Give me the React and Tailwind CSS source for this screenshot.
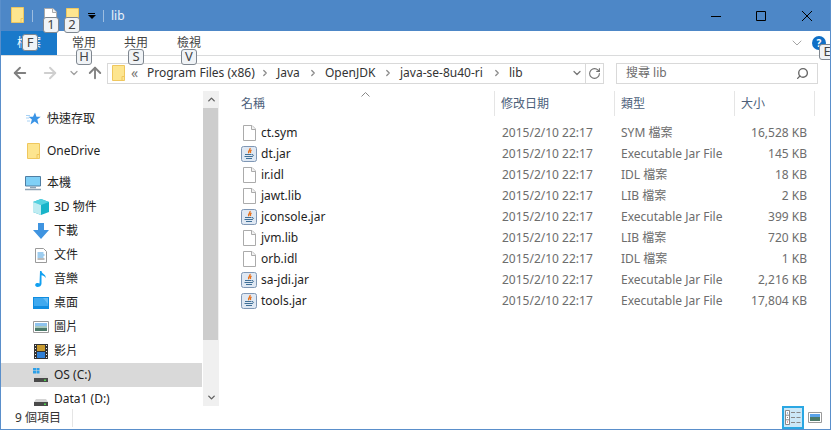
import { ChevronDown, ChevronUp, ArrowLeft, ArrowRight, ArrowUp, RotateCw, Search, ChevronRight } from 'lucide-react';

const font = { fontFamily: '"Noto Sans", "Noto Sans CJK TC", sans-serif' };

const files = [
  { name: 'ct.sym', type: 'SYM 檔案', size: '16,528 KB' },
  { name: 'dt.jar', type: 'Executable Jar File', size: '145 KB', jar: true },
  { name: 'ir.idl', type: 'IDL 檔案', size: '18 KB' },
  { name: 'jawt.lib', type: 'LIB 檔案', size: '2 KB' },
  { name: 'jconsole.jar', type: 'Executable Jar File', size: '399 KB', jar: true },
  { name: 'jvm.lib', type: 'LIB 檔案', size: '720 KB' },
  { name: 'orb.idl', type: 'IDL 檔案', size: '1 KB' },
  { name: 'sa-jdi.jar', type: 'Executable Jar File', size: '2,216 KB', jar: true },
  { name: 'tools.jar', type: 'Executable Jar File', size: '17,804 KB', jar: true },
];

function Folder({ className = 'w-[13px] h-[16px]' }) {
  return (
    <svg className={`shrink-0 ${className}`} viewBox="0 0 13 16">
      <path d="M.5.5h12v15H.5z" fill="#fde58f" stroke="#efc75e" />
      <path d="M10 15.500v-4h2.500" fill="none" stroke="#efc75e" />
    </svg>
  );
}

function DocIcon() {
  return (
    <svg className="w-[13px] h-[16px]" viewBox="0 0 13 16">
      <path d="M.5.500h8.500l3.500 3.500v11.500h-12z" fill="#fff" stroke="#ababab" />
      <path d="M8.500.500v4h4" fill="#f2f2f2" stroke="#ababab" />
    </svg>
  );
}

function JarIcon() {
  return (
    <svg className="w-[16px] h-[16px]" viewBox="0 0 16 16">
      <rect x=".5" y=".5" width="15" height="15" rx="2" fill="#dfe8f3" stroke="#7f97b5" />
      <path d="M9 2c1 1.800-2.500 2.800-1.300 5.200M10.500 4c-1.300.8-1.500 1.800-.8 3" fill="none" stroke="#e8701a" strokeWidth="1.300" />
      <path d="M4 8.500h6.500M3.500 10.500h8M5 12.500h6" stroke="#3f6f96" strokeWidth="1" />
      <path d="M11 8.500c2 0 2 2-.5 2" fill="none" stroke="#3f6f96" />
    </svg>
  );
}

function Drive({ windows }) {
  return (
    <svg className="w-[16px] h-[16px] mt-[2px]" viewBox="0 0 16 16">
      {windows && <path d="M0 0h3v2.500h-3zM3.500 0h3v2.500h-3zM0 3h3v2.500h-3zM3.500 3h3v2.500h-3z" fill="#2b9fe8" />}
      <path d="M3 7h10l2 3h-14z" fill="#d4d4d4" />
      <path d="M1 10h14v4h-14z" fill="#4a4a4a" />
      <path d="M11 11.500h2v1.500h-2z" fill="#4fd34f" />
    </svg>
  );
}

const navIcons = {
  star: (
    <svg className="w-[15px] h-[14px]" viewBox="0 0 15 14">
      <path d="M9 .5l1.500 4.200h4.200l-3.400 2.800 1.300 5-3.900-3-4.200 3 1.400-5-3.400-2.800h4.500z" fill="#3a94e6" />
      <path d="M0 3.500h4M0 6h3M1 9h3" stroke="#a8d2f5" />
    </svg>
  ),
  pc: (
    <svg className="w-[16px] h-[15px]" viewBox="0 0 16 15">
      <path d="M.5.500h15v9.500h-15z" fill="#7fd0f7" stroke="#4f7ea3" />
      <path d="M5 11.500h6M0 13.500h16" stroke="#8ea3b5" strokeWidth="1.500" />
    </svg>
  ),
  cube: (
    <svg className="w-[16px] h-[16px]" viewBox="0 0 16 16">
      <path d="M8 0l8 3v10l-8 3-8-3v-10z" fill="#18b4c9" />
      <path d="M8 0l8 3-8 3-8-3z" fill="#55d2e0" />
      <path d="M0 3l8 3v10l-8-3z" fill="#bfecf2" />
    </svg>
  ),
  down: (
    <svg className="w-[16px] h-[16px]" viewBox="0 0 16 16">
      <path d="M5 0h6v7h5l-8 9-8-9h5z" fill="#3f94e0" />
    </svg>
  ),
  doc: (
    <svg className="w-[12px] h-[15px]" viewBox="0 0 12 15">
      <path d="M.5.500h8l3 3v11h-11z" fill="#fff" stroke="#9a9a9a" />
      <path d="M2.500 5h6M2.500 7h7M2.500 9h6" stroke="#3d9be0" />
      <path d="M2.500 11h7" stroke="#777" />
    </svg>
  ),
  music: (
    <svg className="w-[12px] h-[16px]" viewBox="0 0 12 16">
      <path d="M5 0h1.500c.3 3 5 3.500 4 7-.8-2-2.500-2.500-4-2.800v8.500c0 2-2 3.300-4 3.300-3 0-3-3.500-.5-4 1-.2 2 0 2.500.4z" fill="#12a0f0" />
    </svg>
  ),
  desk: (
    <svg className="w-[16px] h-[12px]" viewBox="0 0 16 12">
      <path d="M0 0h16v12h-16z" fill="#0f8ce0" />
      <path d="M1 1h14v8h-14z" fill="#3fa9ef" />
      <path d="M10 1l5 0v6z" fill="#66bdf5" />
    </svg>
  ),
  pic: (
    <svg className="w-[16px] h-[12px]" viewBox="0 0 16 12">
      <path d="M.5.500h15v11h-15z" fill="#fff" stroke="#9a9a9a" />
      <path d="M2 2h12v3h-12z" fill="#8ec3ee" />
      <path d="M2 5h12v2h-12z" fill="#a9c9c0" />
      <path d="M2 7h12v3h-12z" fill="#4c7a6a" />
    </svg>
  ),
  film: (
    <svg className="w-[14px] h-[15px]" viewBox="0 0 14 15">
      <path d="M0 0h14v15h-14z" fill="#333" />
      <path d="M3 1h8v6h-8z" fill="#c79a2e" />
      <path d="M3 8h8v6h-8z" fill="#2f7fd6" />
      <path d="M1 1h1v1h-1zM1 4h1v1h-1zM1 7h1v1h-1zM1 10h1v1h-1zM1 13h1v1h-1zM12 1h1v1h-1zM12 4h1v1h-1zM12 7h1v1h-1zM12 10h1v1h-1zM12 13h1v1h-1z" fill="#eee" />
    </svg>
  ),
};

const nav = [
  { label: '快速存取', icon: navIcons.star, top: true, mb: 'mb-[8px]' },
  { label: 'OneDrive', icon: <Folder />, top: true, mb: 'mb-[8px]' },
  { label: '本機', icon: navIcons.pc, top: true },
  { label: '3D 物件', icon: navIcons.cube },
  { label: '下載', icon: navIcons.down },
  { label: '文件', icon: navIcons.doc },
  { label: '音樂', icon: navIcons.music },
  { label: '桌面', icon: navIcons.desk },
  { label: '圖片', icon: navIcons.pic },
  { label: '影片', icon: navIcons.film },
  { label: 'OS (C:)', icon: <Drive windows />, active: true },
  { label: 'Data1 (D:)', icon: <Drive /> },
];

function KeyTip({ children, className }) {
  return (
    <span className={`absolute flex items-center justify-center w-[16px] bg-[#f0f3f6] border border-[#7f8790] rounded-[3px] text-[13px] text-[#444] ${className}`}>
      {children}
    </span>
  );
}

function Crumb({ children, className, last }) {
  return (
    <div className={`flex items-center justify-between pr-[7px] shrink-0 ${className}`}>
      <span>{children}</span>
      {!last && <ChevronRight className="w-[10px] h-[10px] text-[#8a8a8a]" strokeWidth={3} />}
    </div>
  );
}

export default function App() {
  return (
    <div style={font} className="relative w-[831px] h-[430px] overflow-hidden bg-white border-x border-b border-[#5a8fcb] text-[12px] text-[#1e1e1e] flex flex-col">
      {/* title bar */}
      <div className="h-[31px] shrink-0 bg-[#4d87c7] flex items-center pl-[10px]">
        <Folder className="w-[13px] h-[16px] mt-[-1px]" />
        <span className="w-px h-[12px] bg-[#9dbde0] ml-[8px]" />
        <span className="w-[13px] ml-[11px]"><DocIcon /></span>
        <span className="w-[13px] ml-[9px]"><Folder /></span>
        <span className="ml-[9px] flex flex-col items-center w-[7px]">
          <span className="w-[7px] h-px bg-black mb-px" />
          <span className="w-0 h-0 border-x-[4px] border-x-transparent border-t-[4px] border-t-black" />
        </span>
        <span className="w-px h-[12px] bg-[#9dbde0] ml-[8px]" />
        <span className="ml-[7px] text-white/90 text-[12px]">lib</span>
        <div className="ml-auto flex items-center mr-[18px]">
          <svg className="w-[10px] h-[10px]" viewBox="0 0 10 10"><path d="M0 5.500h10" stroke="#000" /></svg>
          <svg className="w-[10px] h-[10px] ml-[35px]" viewBox="0 0 10 10"><path d="M.5.500h9v9h-9z" fill="none" stroke="#000" /></svg>
          <svg className="w-[10px] h-[10px] ml-[36px]" viewBox="0 0 10 10"><path d="M0 0l10 10M10 0l-10 10" stroke="#000" /></svg>
        </div>
      </div>

      {/* ribbon tabs */}
      <div className="h-[25px] shrink-0 flex items-center border-b border-[#dadbdc]">
        <div className="w-[56px] h-full bg-[#1979ca] text-white flex items-center justify-center">檔案</div>
        <div className="ml-[15px] w-[52px] text-[#444]">常用</div>
        <div className="w-[53px] text-[#444]">共用</div>
        <div className="text-[#444]">檢視</div>
        <ChevronDown className="ml-auto mr-[7px] w-[16px] h-[16px] text-[#a5a5a5]" strokeWidth={1.500} />
        <span className="mr-[4px] w-[14px] h-[14px] rounded-full bg-[#0f6fc6] text-white text-[10px] font-bold flex items-center justify-center">?</span>
      </div>

      {/* address row */}
      <div className="h-[34px] shrink-0 flex items-center pl-[10px] text-[#808080]">
        <ArrowLeft className="w-[18px] h-[18px]" strokeWidth={2.500} />
        <ArrowRight className="w-[18px] h-[18px] ml-[12px] text-[#cfcfcf]" strokeWidth={2.500} />
        <ChevronDown className="w-[12px] h-[12px] ml-[9px] text-[#a0a0a0]" strokeWidth={2.500} />
        <ArrowUp className="w-[18px] h-[18px] ml-[6px]" strokeWidth={2.500} />
        <div className="ml-[3px] w-[497px] h-[21px] flex items-center border border-[#d9d9d9] pl-[4px]">
          <Folder />
          <span className="w-[22px] pl-[6px] text-[#777] text-[14px] leading-none">«</span>
          <div className="flex items-center text-[#333]">
            <Crumb className="w-[130px]">Program Files (x86)</Crumb>
            <Crumb className="w-[48px]">Java</Crumb>
            <Crumb className="w-[75px]">OpenJDK</Crumb>
            <Crumb className="w-[109px]">java-se-8u40-ri</Crumb>
            <Crumb last>lib</Crumb>
          </div>
          <ChevronDown className="ml-auto mr-[2px] w-[12px] h-[12px] text-[#777]" strokeWidth={2.500} />
          <span className="w-[18px] h-full border-l border-[#d9d9d9] flex items-center justify-center">
            <RotateCw className="w-[13px] h-[13px] text-[#707070]" strokeWidth={2} />
          </span>
        </div>
        <div className="ml-[12px] w-[202px] h-[21px] flex items-center border border-[#d9d9d9] pl-[9px] pr-[8px] text-[#6d6d6d]">
          <span>搜尋 lib</span>
          <Search className="ml-auto w-[13px] h-[13px] -scale-x-100 text-[#666]" strokeWidth={2.500} />
        </div>
      </div>

      {/* body */}
      <div className="flex-1 min-h-0 flex">
        {/* navigation pane */}
        <div className="w-[201px] shrink-0 pt-[17px] overflow-hidden">
          {nav.map(n => (
            <div key={n.label} className={`h-[24px] flex items-center ${n.top ? 'pl-[24px] gap-[6px]' : 'pl-[32px] gap-[5px]'} ${n.mb || ''} ${n.active ? 'bg-[#d9d9d9]' : ''}`}>
              <span className="w-[16px] flex items-center justify-center shrink-0">{n.icon}</span>
              <span className="whitespace-nowrap">{n.label}</span>
            </div>
          ))}
        </div>

        {/* scrollbar */}
        <div className="w-[16px] shrink-0 mt-px ml-px bg-[#f0f0f0] flex flex-col text-[#606060]">
          <div className="h-[17px] flex items-center justify-center"><ChevronUp className="w-[11px] h-[11px]" strokeWidth={3} /></div>
          <div className="w-[15px] h-[232px] bg-[#cdcdcd]" />
          <div className="mt-auto h-[17px] flex items-center justify-center"><ChevronDown className="w-[11px] h-[11px]" strokeWidth={3} /></div>
        </div>

        {/* file list */}
        <div className="flex-1 min-w-0 relative pl-[22px]">
          <svg className="absolute left-[142px] top-[2px] w-[9px] h-[5px]" viewBox="0 0 9 5">
            <path d="M.5 4.500l4-4 4 4" fill="none" stroke="#888" />
          </svg>
          <div className="h-[25px] mt-[1px] flex items-center text-[#4c607a]">
            <div className="w-[254px] h-full flex items-center border-r border-[#e5e5e5]">名稱</div>
            <div className="w-[120px] h-full flex items-center pl-[6px] border-r border-[#e5e5e5]">修改日期</div>
            <div className="w-[120px] h-full flex items-center pl-[6px] border-r border-[#e5e5e5]">類型</div>
            <div className="w-[80px] h-full flex items-center pl-[6px] border-r border-[#e5e5e5]">大小</div>
          </div>
          <div className="mt-[6px]">
            {files.map(f => (
              <div key={f.name} className="h-[21px] flex items-center">
                <div className="w-[254px] flex items-center">
                  <span className="w-[16px] flex justify-center">{f.jar ? <JarIcon /> : <DocIcon />}</span>
                  <span className="ml-[4px] text-[#1e1e1e]">{f.name}</span>
                </div>
                <div className="w-[120px] pl-[7px] text-[#6d6d6d]">2015/2/10 22:17</div>
                <div className="w-[120px] pl-[6px] text-[#6d6d6d]">{f.type}</div>
                <div className="w-[72px] text-right text-[#6d6d6d]">{f.size}</div>
              </div>
            ))}
          </div>
        </div>
      </div>

      {/* status bar */}
      <div className="h-[23px] shrink-0 flex items-center pl-[14px] text-[#333]">
        <span className="pr-[11px] border-r border-[#e5e5e5]">9 個項目</span>
        <div className="ml-auto flex items-center mr-[8px]">
          <span className="w-[22px] h-[23px] bg-[#cce8f7] border-2 border-[#2aa7e3] flex items-center justify-center">
            <svg className="w-[16px] h-[15px]" viewBox="0 0 16 15">
              <path d="M.5.500h4v14h-4zM.5 5.200h4M.5 9.800h4" fill="#fff" stroke="#888" />
              <path d="M2 2.500h1v1h-1z" fill="#3c7ac0" />
              <path d="M2 7h1v1h-1z" fill="#888" />
              <path d="M2 11.500h1v1h-1z" fill="#d04040" />
              <path d="M6 2.500h4M11.500 2.500h4M6 7.500h4M11.500 7.500h4M6 12.500h4M11.500 12.500h4" stroke="#888" />
            </svg>
          </span>
          <svg className="ml-[4px] w-[14px] h-[11px]" viewBox="0 0 14 11">
            <path d="M.5.500h13v10h-13z" fill="#fff" stroke="#9a9a9a" />
            <path d="M2 2h10v3h-10z" fill="#5aa3ea" />
            <path d="M2 5h10v4h-10z" fill="#4c7a6a" />
          </svg>
        </div>
      </div>

      {/* key tips */}
      <KeyTip className="left-[42px] top-[17px] h-[16px]">1</KeyTip>
      <KeyTip className="left-[63px] top-[17px] h-[16px]">2</KeyTip>
      <KeyTip className="left-[21px] top-[34px] h-[17px]">F</KeyTip>
      <KeyTip className="left-[75px] top-[49px] h-[16px]">H</KeyTip>
      <KeyTip className="left-[127px] top-[49px] h-[16px]">S</KeyTip>
      <KeyTip className="left-[180px] top-[49px] h-[16px]">V</KeyTip>
      <KeyTip className="left-[818px] top-[44px] h-[16px]">E</KeyTip>
    </div>
  );
}
